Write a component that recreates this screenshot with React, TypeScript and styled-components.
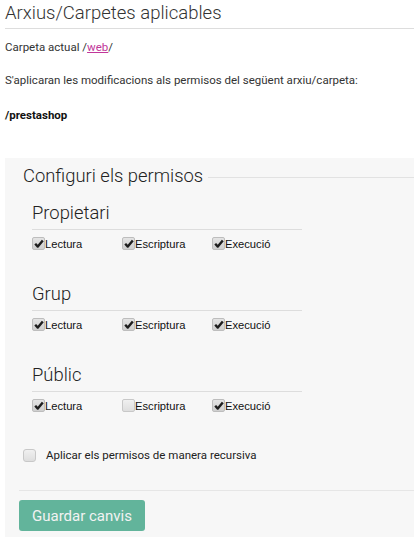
import styled, { createGlobalStyle } from "styled-components";

const GlobalStyle = createGlobalStyle`
    body {
        margin: 0;
        background: #fff;
        font-family: Roboto, "Liberation Sans", sans-serif;
        color: #222;
    }
`;

const Page = styled.div`
    padding-left: 5px;
    width: 409px;
    overflow: hidden;
`;

const Title = styled.h2`
    margin: 0;
    padding: 2px 0 4px 0;
    font-size: 18.5px;
    line-height: 22px;
    font-weight: 300;
    color: #333;
    border-bottom: 1px solid #ddd;
`;

const Text = styled.p<{ $gap: number }>`
    margin: ${(p) => p.$gap}px 0 0 0;
    font-size: 11.5px;
    line-height: 16px;
    color: #333;
`;

const Bold = styled(Text)`
    font-weight: 700;
    color: #111;
`;

const Link = styled.a`
    color: #c1369a;
    text-decoration: underline;
`;

const Panel = styled.div`
    margin-top: 35px;
    background: #f7f7f7;
    padding: 7px 0 30px 14px;
`;

const Legend = styled.div`
    display: flex;
    align-items: center;
    padding-left: 4px;
    font-size: 18.4px;
    font-weight: 300;
    line-height: 22px;
    color: #222;
    &::after {
        content: "";
        flex: 1;
        height: 1px;
        margin-top: 2px;
        background: #e2e2e2;
    }
`;

const Group = styled.div<{ $gap: number }>`
    margin: ${(p) => p.$gap}px 0 0 13px;
    width: 270px;
`;

const GroupTitle = styled.div`
    font-size: 18.4px;
    font-weight: 300;
    line-height: 22px;
    color: #222;
    padding-bottom: 5px;
    border-bottom: 1px solid #ddd;
`;

const Row = styled.div`
    display: grid;
    grid-template-columns: 90px 90px 90px;
    margin-top: 7px;
`;

const Option = styled.label`
    display: flex;
    align-items: center;
    height: 13px;
    font-family: "Liberation Sans", Arial, sans-serif;
    font-size: 11.2px;
    color: #111;
`;

const Box = styled.span<{ $round?: boolean; $on?: boolean }>`
    box-sizing: border-box;
    display: inline-flex;
    align-items: center;
    justify-content: center;
    width: 13px;
    height: 13px;
    flex-shrink: 0;
    border: 1px solid ${(p) => (p.$on ? "#bdbdbd" : "#c8c8c8")};
    border-radius: ${(p) => (p.$round ? "3px" : "2px")};
    background: ${(p) => (p.$on ? "linear-gradient(#e4e4e4, #cfcfcf)" : "linear-gradient(#f0f0f0, #dedede)")};
`;

const Recursive = styled.label`
    display: flex;
    align-items: center;
    gap: 10px;
    margin: 36px 0 0 4px;
    font-size: 11.5px;
    color: #222;
`;

const Separator = styled.div`
    height: 1px;
    background: #e6e6e6;
    margin-top: 28px;
`;

const SaveButton = styled.button`
    margin-top: 9px;
    height: 31px;
    padding: 0 13px;
    border: none;
    border-radius: 3px;
    background: #62b49b;
    color: #f2f2f2;
    font-family: Roboto, sans-serif;
    font-size: 15px;
`;

function Check({ on, round }: { on: boolean; round?: boolean }) {
    return (
        <Box $round={round} $on={on}>
            {on && (
                <svg width="10" height="9" viewBox="0 0 10 9">
                    <path d="M1.2 4.8 L3.8 7.6 L8.8 1.4" fill="none" stroke="#1e1e1e" strokeWidth="2.4" strokeLinejoin="round" />
                </svg>
            )}
        </Box>
    );
}

const groups = [
    { name: "Propietari", perms: [true, true, true], gap: 15 },
    { name: "Grup", perms: [true, true, true], gap: 33 },
    { name: "Públic", perms: [true, false, true], gap: 33 },
];

const labels = ["Lectura", "Escriptura", "Execució"];

export default function App() {
    return (
        <Page>
            <GlobalStyle />
            <Title>Arxius/Carpetes aplicables</Title>
            <Text $gap={10}>Carpeta actual /<Link href="#">web</Link>/</Text>
            <Text $gap={17}>S'aplicaran les modificacions als permisos del següent arxiu/carpeta:</Text>
            <Bold $gap={19}>/prestashop</Bold>
            <Panel>
                <Legend>Configuri els permisos&nbsp;</Legend>
                {groups.map((g) => (
                    <Group key={g.name} $gap={g.gap}>
                        <GroupTitle>{g.name}</GroupTitle>
                        <Row>
                            {labels.map((l, i) => (
                                <Option key={l}>
                                    <Check on={g.perms[i]} />
                                    {l}
                                </Option>
                            ))}
                        </Row>
                    </Group>
                ))}
                <Recursive>
                    <Check on={false} round />
                    Aplicar els permisos de manera recursiva
                </Recursive>
                <Separator />
                <SaveButton>Guardar canvis</SaveButton>
            </Panel>
        </Page>
    );
}
